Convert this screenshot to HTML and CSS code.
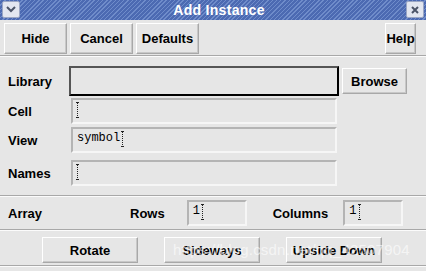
FILE: index.html
```html
<!DOCTYPE html>
<html lang="en">
<head>
    <meta charset="UTF-8">
    <title>Add Instance</title>
    <link rel="stylesheet" href="styles.css">
</head>
<body>

    <div class="window">
        <!-- Title bar -->
        <div class="titlebar">
            <div class="tb-btn">
                <svg width="10" height="7" viewBox="0 0 10 7"><path d="M1 1 L5 5 L9 1" fill="none" stroke="#4b5468" stroke-width="2"/></svg>
            </div>
            <div class="title">Add Instance</div>
            <div class="tb-btn">
                <svg width="8" height="8" viewBox="0 0 8 8"><path d="M1 1 L7 7 M7 1 L1 7" fill="none" stroke="#4b5468" stroke-width="2"/></svg>
            </div>
        </div>

        <!-- Toolbar -->
        <div class="toolbar">
            <button class="btn tool">Hide</button>
            <button class="btn tool">Cancel</button>
            <button class="btn tool">Defaults</button>
            <button class="btn help">Help</button>
        </div>
        <div class="sep"></div>

        <!-- Form -->
        <div class="form">
            <div class="row row-lib">
                <span class="label">Library</span>
                <div class="field focus"></div>
                <button class="btn browse">Browse</button>
            </div>
            <div class="row row-cell">
                <span class="label">Cell</span>
                <div class="field"><span class="ibeam"></span></div>
            </div>
            <div class="row row-view">
                <span class="label">View</span>
                <div class="field"><span class="mono">symbol</span><span class="ibeam"></span></div>
            </div>
            <div class="row row-names">
                <span class="label">Names</span>
                <div class="field"><span class="ibeam"></span></div>
            </div>
        </div>
        <div class="sep sep-form"></div>

        <!-- Array -->
        <div class="array">
            <span class="label">Array</span>
            <span class="label rows-label">Rows</span>
            <div class="field small"><span class="mono">1</span><span class="ibeam"></span></div>
            <span class="label cols-label">Columns</span>
            <div class="field small"><span class="mono">1</span><span class="ibeam"></span></div>
        </div>
        <div class="sep sep-array"></div>

        <!-- Orientation -->
        <div class="actions">
            <button class="btn action">Rotate</button>
            <button class="btn action">Sideways</button>
            <button class="btn action">Upside Down</button>
        </div>
        <div class="sep sep-bottom"></div>

        <div class="watermark">https://blog.csdn.net/qq_42507904</div>
    </div>

</body>
</html>
```

FILE: styles.css
```css
body {
    margin: 0;
    background-color: #e6e6e6;
    font-family: "Liberation Sans", Arial, sans-serif;
}
.window {
    position: relative;
    width: 426px;
    height: 271px;
    overflow: hidden;
    background-color: #e6e6e6;
}
.titlebar {
    display: flex;
    align-items: center;
    height: 20px;
    padding: 0 2px;
    box-sizing: border-box;
    background-color: #4c6ab2;
    background-image: repeating-linear-gradient(-45deg, #4c6ab2 0px, #4c6ab2 2px, #6f8cca 2px, #6f8cca 3px);
}
.tb-btn {
    width: 18px;
    height: 17px;
    margin-top: -1px;
    display: flex;
    align-items: center;
    justify-content: center;
    background-color: #e2e6f0;
    border: 1px solid #9aa6c4;
    border-radius: 2px;
    box-sizing: border-box;
}
.title {
    flex: 1;
    text-align: center;
    color: white;
    font-weight: bold;
    font-size: 14px;
    letter-spacing: 0.3px;
    padding-left: 12px;
}
.btn {
    font-family: "Liberation Sans", Arial, sans-serif;
    font-weight: bold;
    font-size: 13px;
    color: black;
    background-color: #e6e6e6;
    border: 1px solid;
    border-color: #ffffff #a8a8a8 #a8a8a8 #ffffff;
    box-shadow: inset -1px -1px 0 #c8c8c8;
    padding: 0;
    box-sizing: border-box;
}
.toolbar {
    display: flex;
    gap: 3px;
    padding: 3px 0 0 4px;
    height: 34px;
    box-sizing: border-box;
}
.tool {
    width: 63px;
    height: 31px;
}
.help {
    width: 31px;
    height: 31px;
    margin-left: auto;
    margin-right: 10px;
}
.sep {
    height: 1px;
    background-color: #a8a8a8;
    border-bottom: 1px solid #fbfbfb;
    margin-top: 1px;
}
.form {
    padding-top: 9px;
}
.row {
    display: flex;
    align-items: center;
}
.label {
    font-weight: bold;
    font-size: 13px;
    width: 62px;
    padding-left: 8px;
    flex-shrink: 0;
}
.field {
    width: 266px;
    height: 26px;
    margin-left: 1px;
    box-sizing: border-box;
    border: 2px solid;
    border-color: #b4b4b4 #f6f6f6 #f6f6f6 #b4b4b4;
    padding: 2px 0 0 2px;
    display: flex;
    align-items: flex-start;
}
.focus {
    width: 270px;
    height: 30px;
    margin-left: -1px;
    border-color: #555555 #000000 #000000 #555555;
}
.browse {
    width: 65px;
    height: 26px;
    margin-left: 3px;
}
.row-cell {
    margin-top: 2px;
}
.row-view {
    margin-top: 3px;
}
.row-names {
    margin-top: 7px;
}
.mono {
    font-family: "Liberation Mono", "Courier New", monospace;
    font-size: 12px;
    line-height: 14px;
    margin-left: 2px;
}
.ibeam {
    display: inline-block;
    width: 3px;
    height: 14px;
    margin-left: 1px;
    border-top: 1px solid #222;
    border-bottom: 1px solid #222;
    background-image: linear-gradient(#222 50%, transparent 50%);
    background-size: 1px 2px;
    background-repeat: repeat-y;
    background-position: 1px 0;
}
.sep-form {
    margin-top: 9px;
}
.array {
    display: flex;
    align-items: center;
    margin-top: 3px;
    height: 26px;
}
.rows-label {
    width: auto;
    padding-left: 60px;
}
.cols-label {
    width: auto;
    padding-left: 26px;
}
.array .field.small {
    width: 60px;
    margin-left: 22px;
}
.array .field.small:last-child {
    margin-left: 15px;
}
.sep-array {
    margin-top: 3px;
}
.actions {
    display: flex;
    gap: 26px;
    padding: 6px 0 0 42px;
}
.action {
    width: 96px;
    height: 26px;
}
.sep-bottom {
    margin-top: 2px;
}
.watermark {
    position: absolute;
    left: 173px;
    top: 241px;
    font-family: "Liberation Sans", Arial, sans-serif;
    font-size: 15px;
    letter-spacing: 0.2px;
    color: rgba(255, 255, 255, 0.6);
    white-space: nowrap;
}
```
